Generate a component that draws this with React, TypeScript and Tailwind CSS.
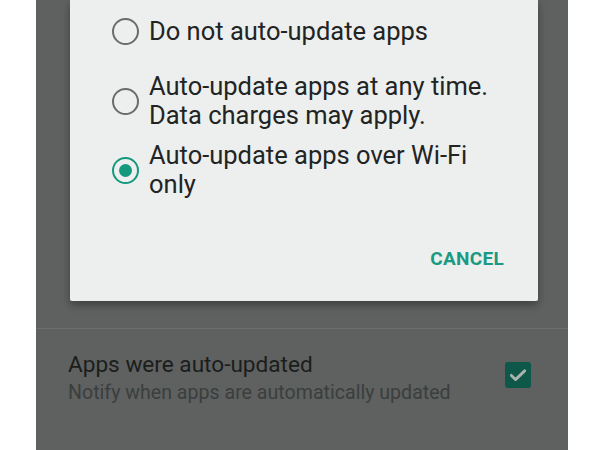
const options = [
  { id: "never", lines: ["Do not auto-update apps"], gap: "mt-[17px]" },
  { id: "any", lines: ["Auto-update apps at any time.", "Data charges may apply."], gap: "mt-[26px]" },
  { id: "wifi", lines: ["Auto-update apps over Wi-Fi", "only"], gap: "mt-[11px]" },
];

function Radio({ checked }: { checked: boolean }) {
  if (checked) {
    return (
      <span className="flex h-[27px] w-[27px] shrink-0 items-center justify-center rounded-full border-[2.5px] border-[#14997f]">
        <span className="h-[13px] w-[13px] rounded-full bg-[#14997f]" />
      </span>
    );
  }
  return <span className="h-[27px] w-[27px] shrink-0 rounded-full border-[2.5px] border-[#6a6c6b]" />;
}

function UpdateDialog({ selected }: { selected: string }) {
  return (
    <div className="ml-[34px] flex h-[301px] w-[468px] flex-col rounded-b-[2px] bg-[#edefee] shadow-[0_4px_8px_rgba(0,0,0,0.35)]">
      <div className="flex flex-col pl-[42px]">
        {options.map((o) => (
          <div key={o.id} className={`flex items-center gap-[10px] ${o.gap}`}>
            <Radio checked={o.id === selected} />
            <div className="text-[25.5px] leading-[29px] text-[#222423]">
              {o.lines.map((l) => (
                <div key={l}>{l}</div>
              ))}
            </div>
          </div>
        ))}
      </div>
      <div className="mt-[48px] flex justify-end pr-[34px]">
        <span className="text-[19px] font-bold leading-[24px] tracking-[0.3px] text-[#1a9a82]">CANCEL</span>
      </div>
    </div>
  );
}

export default function App() {
  return (
    <div className="flex h-[450px] w-[600px] bg-white" style={{ fontFamily: "Roboto, 'Noto Sans', sans-serif" }}>
      <div className="ml-[36px] flex h-full w-[532px] flex-col bg-[#5e6160]">
        <UpdateDialog selected="wifi" />
        <div className="mt-[27px] h-px bg-[#6b6e6d]" />
        <div className="flex items-center justify-between pl-[32px] pr-[37px] pt-[21px]">
          <div>
            <div className="text-[22.6px] leading-[29px] text-[#1b1d1c]">Apps were auto-updated</div>
            <div className="text-[19.6px] leading-[27px] text-[#3b3e3d]">Notify when apps are automatically updated</div>
          </div>
          <span className="mb-[6px] flex h-[26px] w-[26px] items-center justify-center rounded-[3px] bg-[#0d5848]">
            <svg width="20" height="20" viewBox="0 0 24 24" fill="none" stroke="#aab2af" strokeWidth="3.5" strokeLinecap="round" strokeLinejoin="round">
              <path d="M4 12.5l5 5L20 7" />
            </svg>
          </span>
        </div>
      </div>
    </div>
  );
}
